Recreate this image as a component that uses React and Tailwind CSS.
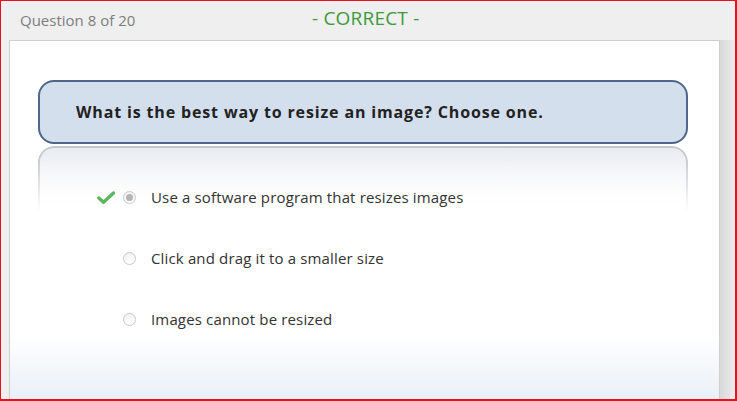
import React from "react";

const options = [
  { id: 1, label: "Use a software program that resizes images", selected: true },
  { id: 2, label: "Click and drag it to a smaller size", selected: false },
  { id: 3, label: "Images cannot be resized", selected: false },
];

function Check() {
  return (
    <svg width="18" height="13" viewBox="0 0 18 13" className="block">
      <path d="M1.8 7 L6.5 11.2 L16.5 2" fill="none" stroke="#5cb85c" strokeWidth="3.4" strokeLinecap="round" strokeLinejoin="round" />
    </svg>
  );
}

function Radio({ selected }) {
  return (
    <span className="flex h-[13px] w-[13px] items-center justify-center rounded-full border border-[#c9c9c9] bg-[linear-gradient(#f1f1f1,#ffffff)]">
      {selected && <span className="h-[7px] w-[7px] rounded-full bg-[#b4b4b4]" />}
    </span>
  );
}

export default function App() {
  return (
    <div className="flex h-[401px] w-[737px] flex-col overflow-hidden border-t border-l border-r-2 border-b-2 border-[#e8101a] bg-[#efefef] font-['Open_Sans',sans-serif]">
      <div className="relative flex h-[39px] shrink-0 items-center">
        <span className="ml-[19px] text-[15px] text-[#7d7d7d]">Question 8 of 20</span>
        <span className="absolute left-[311px] top-[3px] text-[19px] tracking-[0.2px] text-[#3c9a3c]">- CORRECT -</span>
      </div>
      <div className="flex min-h-0 flex-1">
        <div className="w-[8px] shrink-0" />
        <div className="flex-1 border-l border-t border-r border-[#cfcfcf] bg-[linear-gradient(to_bottom,#ffffff_0%,#ffffff_82%,#e9f0f8_100%)]">
          <div className="ml-[28px] mr-[31px] mt-[39px]">
            <div className="flex h-[64px] items-center rounded-[16px] border-2 border-[#4f6688] bg-[#d4dfee] pl-[36px]">
              <span className="text-[16px] font-bold tracking-[0.85px] text-[#222]">
                What is the best way to resize an image? Choose one.
              </span>
            </div>
            <div className="relative">
              <div className="absolute left-0 right-0 top-[2px] h-[66px] rounded-t-[16px] border-x-2 border-t-2 border-[#c4c8ce] bg-[linear-gradient(to_bottom,#e9ecf1,#ffffff)] [mask-image:linear-gradient(to_bottom,black_15%,transparent_100%)]" />
              <div className="relative pt-[23px]">
                {options.map((o) => (
                  <div key={o.id} className="flex h-[61px] items-center">
                    <div className="ml-[59px] flex w-[21px] justify-start">
                      {o.selected && <Check />}
                    </div>
                    <div className="ml-[5px]">
                      <Radio selected={o.selected} />
                    </div>
                    <span className="ml-[15px] text-[15px] tracking-[0.15px] text-[#333]">{o.label}</span>
                  </div>
                ))}
              </div>
            </div>
          </div>
        </div>
        <div className="w-[15px] shrink-0 bg-[linear-gradient(to_right,#d9d9d9,#e4e4e4_60%,#ededed)]" />
      </div>
    </div>
  );
}
